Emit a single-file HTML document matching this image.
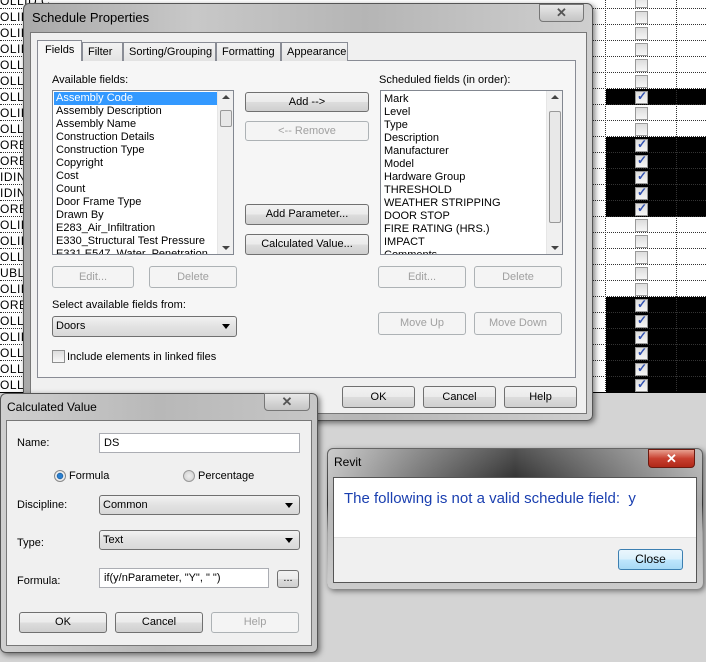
<!DOCTYPE html>
<html><head><meta charset="utf-8"><style>
*{box-sizing:border-box;margin:0;padding:0}
body{width:706px;height:662px;overflow:hidden;background:#d4d4d4;font-family:"Liberation Sans",sans-serif;font-size:11px;color:#000;position:relative}
.a{position:absolute}
.row{position:absolute;left:0;width:706px;height:16px;border-bottom:1px dotted #333}
.lt{position:absolute;left:0;top:1px;font-size:12px;letter-spacing:0.5px}
.cb{position:absolute;left:635px;width:13px;height:13px;border:1px solid #999;background:linear-gradient(#ddd,#f6f6f6)}
.btn{position:absolute;border:1px solid #707070;border-radius:3px;background:linear-gradient(#f2f2f2 0%,#ebebeb 50%,#dddddd 51%,#cfcfcf 100%);text-align:center;font-size:11px}
.dis{border-color:#adb2b5;background:#f4f4f4;color:#a0a0a0}
.list{position:absolute;background:#fff;border:1px solid #828790}
.it{height:13px;line-height:13px;padding-left:3px;white-space:nowrap}
.sb{position:absolute;right:0;top:0;bottom:0;width:16px;background:#f0f0f0;border-left:1px solid #e6e6e6}
.up,.dn{position:absolute;left:4px;width:0;height:0;border:4px solid transparent}
.up{top:4px;border-bottom:4px solid #444;border-top:none}
.dn{bottom:4px;border-top:4px solid #444;border-bottom:none}
.in{position:absolute;background:#fff;border:1px solid #abadb3;padding-left:4px}
.sel{position:absolute;border:1px solid #707070;border-radius:3px;background:linear-gradient(#f2f2f2,#e2e2e2 50%,#d8d8d8);padding-left:3px}
.sel:after{content:"";position:absolute;right:6px;top:7px;border:4px solid transparent;border-top:5px solid #000}
.tab{position:absolute;top:42px;height:19px;border:1px solid #898c95;border-bottom:none;background:linear-gradient(#f3f3f3,#e3e3e3);padding:3px 5px 0;font-size:11px}
</style></head><body>
<div class="a" style="left:0;top:0;width:706px;height:393px;background:#fff"></div>
<div class="a" style="left:606px;top:89px;width:100px;height:16px;background:#000"></div>
<div class="a" style="left:606px;top:137px;width:100px;height:80px;background:#000"></div>
<div class="a" style="left:606px;top:297px;width:100px;height:96px;background:#000"></div>
<div id="rows"></div>
<div class="a" style="left:605px;top:0;height:393px;border-left:1px dotted #333"></div>
<div class="a" style="left:676px;top:0;height:393px;border-left:1px dotted #333"></div>
<div class="a" style="left:0;top:392px;width:706px;height:1px;background:#000"></div>

<div class="a" style="left:23px;top:3px;width:570px;height:418px;border:1px solid #555;border-radius:6px;background:linear-gradient(90deg,#a9a9a9,#c8c8c8 30%,#b5b5b5 60%,#cfcfcf);box-shadow:2px 2px 6px rgba(0,0,0,.5)"></div>
<div class="a" style="left:32px;top:10px;font-size:13px">Schedule Properties</div>
<div class="a" style="left:539px;top:4px;width:45px;height:18px;border:1px solid #777;border-radius:0 0 4px 4px;background:linear-gradient(#e8e8e8,#c4c4c4);text-align:center;font-weight:bold;color:#555;font-size:13px;line-height:16px">✕</div>
<div class="a" style="left:30px;top:32px;width:557px;height:382px;background:#f0f0f0;border:1px solid #777"></div>
<div class="a" style="left:37px;top:60px;width:539px;height:318px;background:#f6f6f6;border:1px solid #898c95"></div>
<div class="tab" style="left:82px;width:41px">Filter</div>
<div class="tab" style="left:123px;width:93px">Sorting/Grouping</div>
<div class="tab" style="left:216px;width:65px">Formatting</div>
<div class="tab" style="left:281px;width:67px">Appearance</div>
<div class="tab" style="left:37px;top:40px;width:45px;height:21px;background:#f6f6f6;padding-left:7px">Fields</div>

<div class="a" style="left:52px;top:74px">Available fields:</div>
<div class="list" style="left:52px;top:90px;width:182px;height:165px;overflow:hidden;padding-top:1px">
<div class="it" style="background:#3399ff;color:#fff;width:163px;margin-left:1px;padding-left:2px">Assembly Code</div>
<div class="it">Assembly Description</div><div class="it">Assembly Name</div><div class="it">Construction Details</div><div class="it">Construction Type</div><div class="it">Copyright</div><div class="it">Cost</div><div class="it">Count</div><div class="it">Door Frame Type</div><div class="it">Drawn By</div><div class="it">E283_Air_Infiltration</div><div class="it">E330_Structural Test Pressure</div><div class="it">E331 E547_Water_Penetration</div>
<div class="sb"><div class="a" style="left:2px;top:19px;width:12px;height:17px;border:1px solid #999;border-radius:2px;background:#e8e8e8"></div><i class="up"></i><i class="dn"></i></div>
</div>
<div class="btn" style="left:245px;top:92px;width:124px;height:20px;line-height:18px">Add --&gt;</div>
<div class="btn dis" style="left:245px;top:121px;width:124px;height:20px;line-height:18px">&lt;-- Remove</div>
<div class="btn" style="left:245px;top:204px;width:124px;height:21px;line-height:19px">Add Parameter...</div>
<div class="btn" style="left:245px;top:234px;width:124px;height:21px;line-height:19px">Calculated Value...</div>

<div class="a" style="left:379px;top:74px">Scheduled fields (in order):</div>
<div class="list" style="left:380px;top:90px;width:183px;height:165px;overflow:hidden;padding-top:2px">
<div class="it">Mark</div><div class="it">Level</div><div class="it">Type</div><div class="it">Description</div><div class="it">Manufacturer</div><div class="it">Model</div><div class="it">Hardware Group</div><div class="it">THRESHOLD</div><div class="it">WEATHER STRIPPING</div><div class="it">DOOR STOP</div><div class="it">FIRE RATING (HRS.)</div><div class="it">IMPACT</div><div class="it">Comments</div>
<div class="sb"><div class="a" style="left:2px;top:20px;width:12px;height:112px;border:1px solid #999;border-radius:2px;background:#e8e8e8"></div><i class="up"></i><i class="dn"></i></div>
</div>

<div class="btn dis" style="left:52px;top:266px;width:82px;height:22px;line-height:20px">Edit...</div>
<div class="btn dis" style="left:149px;top:266px;width:88px;height:22px;line-height:20px">Delete</div>
<div class="btn dis" style="left:378px;top:266px;width:88px;height:22px;line-height:20px">Edit...</div>
<div class="btn dis" style="left:474px;top:266px;width:88px;height:22px;line-height:20px">Delete</div>
<div class="a" style="left:52px;top:299px">Select available fields from:</div>
<div class="sel" style="left:52px;top:316px;width:185px;height:21px;line-height:19px">Doors</div>
<div class="btn dis" style="left:378px;top:312px;width:88px;height:23px;line-height:21px">Move Up</div>
<div class="btn dis" style="left:474px;top:312px;width:88px;height:23px;line-height:21px">Move Down</div>
<div class="a" style="left:52px;top:350px;width:13px;height:13px;border:1px solid #8e8f8f;background:linear-gradient(#ddd,#f8f8f8)"></div>
<div class="a" style="left:67px;top:351px">Include elements in linked files</div>
<div class="btn" style="left:342px;top:386px;width:73px;height:22px;line-height:20px">OK</div>
<div class="btn" style="left:423px;top:386px;width:73px;height:22px;line-height:20px">Cancel</div>
<div class="btn" style="left:504px;top:386px;width:73px;height:22px;line-height:20px">Help</div>

<div class="a" style="left:0;top:393px;width:318px;height:260px;border:1px solid #555;border-radius:6px;background:linear-gradient(90deg,#cfcfcf,#b8b8b8 50%,#c6c6c6);box-shadow:2px 2px 6px rgba(0,0,0,.5)"></div>
<div class="a" style="left:7px;top:400px;font-size:12px">Calculated Value</div>
<div class="a" style="left:264px;top:393px;width:46px;height:18px;border:1px solid #777;border-radius:0 0 4px 4px;background:linear-gradient(#e8e8e8,#c4c4c4);text-align:center;font-weight:bold;color:#555;font-size:13px;line-height:16px">✕</div>
<div class="a" style="left:6px;top:420px;width:306px;height:226px;background:#f0f0f0;border:1px solid #777"></div>
<div class="a" style="left:17px;top:437px">Name:</div>
<div class="in" style="left:99px;top:433px;width:201px;height:20px;line-height:18px">DS</div>
<div class="a" style="left:54px;top:470px;width:12px;height:12px;border-radius:50%;border:1px solid #888;background:radial-gradient(#2a7fd0 30%,#1a5fa0 40%,#eee 50%)"></div>
<div class="a" style="left:69px;top:470px">Formula</div>
<div class="a" style="left:183px;top:470px;width:12px;height:12px;border-radius:50%;border:1px solid #999;background:radial-gradient(#eee,#ccc)"></div>
<div class="a" style="left:198px;top:470px">Percentage</div>
<div class="a" style="left:17px;top:499px">Discipline:</div>
<div class="sel" style="left:99px;top:495px;width:201px;height:20px;line-height:18px">Common</div>
<div class="a" style="left:17px;top:537px">Type:</div>
<div class="sel" style="left:99px;top:530px;width:201px;height:20px;line-height:18px">Text</div>
<div class="a" style="left:17px;top:575px">Formula:</div>
<div class="in" style="left:99px;top:568px;width:170px;height:20px;line-height:18px">if(y/nParameter, "Y", " ")</div>
<div class="btn" style="left:277px;top:570px;width:22px;height:18px;line-height:14px">...</div>
<div class="btn" style="left:19px;top:612px;width:88px;height:21px;line-height:19px">OK</div>
<div class="btn" style="left:115px;top:612px;width:88px;height:21px;line-height:19px">Cancel</div>
<div class="btn dis" style="left:211px;top:612px;width:88px;height:21px;line-height:19px">Help</div>

<div class="a" style="left:327px;top:448px;width:376px;height:141px;border:1px solid #333;border-radius:6px;background:linear-gradient(90deg,#bbb,#666 25%,#1a1a1a 50%,#555 70%,#aaa);box-shadow:2px 2px 6px rgba(0,0,0,.5)"></div>
<div class="a" style="left:327px;top:448px;width:376px;height:141px;border-radius:6px;background:linear-gradient(#ffffff40,#ffffff00 40%,#bbbbbbcc 60%,#ccc)"></div>
<div class="a" style="left:334px;top:455px;font-size:12px;color:#000">Revit</div>
<div class="a" style="left:648px;top:449px;width:47px;height:19px;border:1px solid #6b1a10;border-radius:0 0 4px 4px;background:linear-gradient(#e8a090,#c84030 50%,#b02818);text-align:center;font-weight:bold;color:#fff;font-size:13px;line-height:17px">✕</div>
<div class="a" style="left:333px;top:477px;width:364px;height:106px;background:#f0f0f0;border:1px solid #555"></div>
<div class="a" style="left:334px;top:478px;width:362px;height:60px;background:#fff;border-bottom:1px solid #dfdfdf"></div>
<div class="a" style="left:344px;top:490px;font-size:15px;color:#1a3fb0">The following is not a valid schedule field:&nbsp; y</div>
<div class="btn" style="left:618px;top:549px;width:65px;height:21px;line-height:19px;border-color:#3c7fb1;background:linear-gradient(#eaf6fd,#d9f0fc 50%,#bee6fd 51%,#a7d9f5);font-size:12px">Close</div>

<script>
var t=["OLLID C","OLID C","OLID C","OLID C","OLLO","OLLO","OLLO","OLID C","OLLO","ORE","ORE","IDING","IDING","ORE","OLID C","OLID C","OLLO","UBLI","OLID C","ORE","OLLO","OLID C","OLLO","OLLO","OLLO"];
var black=[6,9,10,11,12,13,19,20,21,22,23,24];
var h="";
for(var k=0;k<25;k++){var y=-7+16*k;
h+='<div class="row" style="top:'+y+'px"><span class="lt">'+t[k]+'</span></div>';
h+='<div class="cb" style="top:'+(y+2)+'px">'+(black.indexOf(k)>=0?'<span style="position:absolute;left:1px;top:-3px;color:#3050b0;font-size:12px;font-weight:bold">✓</span>':'')+'</div>';}
document.getElementById("rows").innerHTML=h;
</script>
</body></html>
